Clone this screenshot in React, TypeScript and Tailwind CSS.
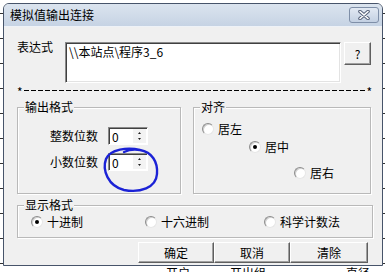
import React from "react";

const Radio = ({ checked }: { checked?: boolean }) => (
  <span className="w-[12px] h-[12px] shrink-0 rounded-full bg-white border border-t-[#8c8c8c] border-l-[#8c8c8c] border-b-[#e6e6e6] border-r-[#e6e6e6] shadow-[inset_1px_1px_0_#cfcfcf] flex items-center justify-center">
    {checked && <span className="w-[4px] h-[4px] rounded-full bg-black" />}
  </span>
);

const Option = ({ label, checked, className = "" }: { label: string; checked?: boolean; className?: string }) => (
  <div className={`flex items-center gap-[4px] h-[14px] ${className}`}>
    <Radio checked={checked} />
    <span className="leading-[14px]">{label}</span>
  </div>
);

const Group = ({ title, className = "", children }: { title: string; className?: string; children?: React.ReactNode }) => (
  <div className={`relative border border-[#b9b9b9] shadow-[inset_1px_1px_0_#fff,1px_1px_0_#fff] ${className}`}>
    <span className="absolute left-[6px] top-[-8px] px-[1px] bg-[#f0f0f0] leading-[14px]">{title}</span>
    {children}
  </div>
);

const Spin = () => (
  <div className="w-[40px] h-[18px] flex bg-white border border-t-[#8a8a8a] border-l-[#8a8a8a] border-b-white border-r-white shadow-[inset_1px_1px_0_#404040]">
    <span className="flex-1 pl-[3px] pt-[1px] leading-[15px]">0</span>
    <div className="w-[13px] my-[1px] mr-[1px] flex flex-col items-center justify-between py-[3px] bg-[#f3f3f3]">
      <svg width="3" height="2" viewBox="0 0 3 2">
        <path d="M1.5 0 L3 2 L0 2 Z" fill="#222" />
      </svg>
      <svg width="3" height="2" viewBox="0 0 3 2">
        <path d="M0 0 L3 0 L1.5 2 Z" fill="#222" />
      </svg>
    </div>
  </div>
);

const Btn = ({ label, className = "" }: { label: string; className?: string }) => (
  <button className={`h-[21px] bg-[#f0f0f0] border border-t-white border-l-white border-b-[#5f5f5f] border-r-[#5f5f5f] shadow-[inset_-1px_-1px_0_#a0a0a0] leading-[19px] ${className}`}>
    {label}
  </button>
);

export default function App() {
  return (
    <div className="relative w-[385px] h-[272px] overflow-hidden bg-white text-black text-[12px] font-['Noto_Sans_CJK_SC',sans-serif]">
      {/* table behind the dialog */}
      <div className="flex flex-col">
        <div className="h-[14px] border-b border-[#333]" />
        {Array.from({ length: 10 }).map((_, i) => (
          <div key={i} className="h-[25px] border-b border-[#333]" />
        ))}
        <div className="h-[25px] flex leading-[14px] pt-[2px]">
          <span className="ml-[166px]">开启</span>
          <span className="ml-[40px]">开出组</span>
          <span className="ml-[80px]">直径</span>
        </div>
      </div>

      {/* dialog window */}
      <div className="absolute left-[3px] top-[3px] w-[380px] h-[263px] flex flex-col bg-[#f0f0f0] border border-[#47546a] rounded-t-[6px] overflow-hidden">
        <div className="h-[23px] shrink-0 flex items-center justify-between pl-[6px] pr-[3px] bg-[linear-gradient(#dbe4ef,#c6d3e4)] border-b border-[#eef2f7]">
          <span className="leading-[14px]">模拟值输出连接</span>
          <div className="w-[30px] h-[16px] rounded-[3px] border border-[#7f8fa8] bg-[linear-gradient(#e2e9f3,#c3d0e2)] flex items-center justify-center">
            <svg width="14" height="10" viewBox="0 0 14 10">
              <path d="M3 1.5 L11 8.5 M11 1.5 L3 8.5" stroke="#56627a" strokeWidth="3.6" strokeLinecap="round" />
              <path d="M3 1.5 L11 8.5 M11 1.5 L3 8.5" stroke="#fff" strokeWidth="1.6" strokeLinecap="round" />
            </svg>
          </div>
        </div>

        <div className="flex flex-col pl-[13px] pt-[15px]">
          <div className="flex items-start">
            <span className="w-[48px] leading-[14px] -mt-[2px]">表达式</span>
            <div className="w-[276px] h-[41px] bg-white border border-t-[#8a8a8a] border-l-[#8a8a8a] border-b-white border-r-white shadow-[inset_1px_1px_0_#404040,inset_-1px_-1px_0_#e3e3e3] pl-[3px] pt-[2px] leading-[14px]">
              {"\\\\本站点\\程序3_6"}
            </div>
            <button className="ml-[3px] w-[27px] h-[23px] bg-[#f0f0f0] border border-t-white border-l-white border-b-[#5f5f5f] border-r-[#5f5f5f] shadow-[inset_-1px_-1px_0_#a0a0a0] leading-[20px]">
              ?
            </button>
          </div>

          <div className="mt-[2px] h-[10px] w-[355px] flex items-center">
            <span className="leading-[10px] pt-[3px]">*</span>
            <div className="flex-1 mx-[1px] h-[1px] bg-[repeating-linear-gradient(90deg,#000_0_5px,transparent_5px_7px)]" />
            <span className="leading-[10px] pt-[3px]">*</span>
          </div>

          <div className="mt-[12px] flex gap-[12px]">
            <Group title="输出格式" className="w-[164px] h-[87px]">
              <div className="flex flex-col pt-[19px] pl-[32px]">
                <div className="flex items-center h-[18px]">
                  <span className="w-[58px] leading-[18px]">整数位数</span>
                  <Spin />
                </div>
                <div className="flex items-center h-[18px] mt-[8px]">
                  <span className="w-[58px] leading-[18px]">小数位数</span>
                  <Spin />
                </div>
              </div>
            </Group>
            <Group title="对齐" className="w-[178px] h-[87px]">
              <div className="flex flex-col pt-[14px]">
                <Option label="居左" className="ml-[8px]" />
                <Option label="居中" checked className="ml-[55px] mt-[4px]" />
                <Option label="居右" className="ml-[100px] mt-[12px]" />
              </div>
            </Group>
          </div>

          <Group title="显示格式" className="mt-[11px] w-[356px] h-[33px]">
            <div className="flex pt-[9px] pl-[13px]">
              <Option label="十进制" checked className="w-[114px]" />
              <Option label="十六进制" className="w-[119px]" />
              <Option label="科学计数法" />
            </div>
          </Group>

          <div className="mt-[4px] ml-[121px] flex">
            <Btn label="确定" className="w-[76px]" />
            <Btn label="取消" className="w-[76px]" />
            <Btn label="清除" className="w-[78px]" />
          </div>
        </div>
      </div>

      {/* hand-drawn annotation */}
      <svg className="absolute left-[100px] top-[144px]" width="64" height="52" viewBox="0 0 64 52">
        <path
          d="M40 6 C28 3 10 5 6 15 C2 26 8 42 24 46 C40 49 56 44 57 30 C58 18 52 8 40 6 C34 5 28 6 24 8"
          fill="none"
          stroke="#1b22d6"
          strokeWidth="2.4"
          strokeLinecap="round"
        />
      </svg>
    </div>
  );
}
